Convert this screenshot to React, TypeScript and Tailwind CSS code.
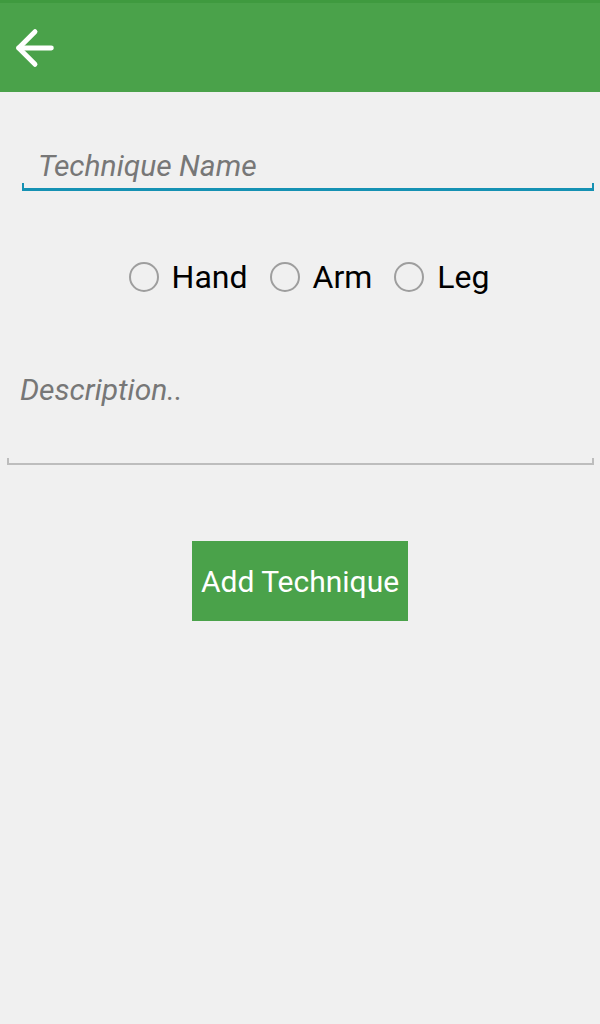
import { ArrowLeft } from "lucide-react";

const font = { fontFamily: "Roboto, 'Noto Sans', sans-serif" };

function Radio({ label }: { label: string }) {
  return (
    <label className="flex items-center gap-[13px]">
      <span className="block h-[30px] w-[30px] rounded-full border-2 border-[#9e9e9e]" />
      <span className="text-[32px] leading-none text-black">{label}</span>
    </label>
  );
}

export default function App() {
  return (
    <div className="flex min-h-[1024px] w-[600px] flex-col bg-[#f0f0f0]" style={font}>
      {/* Toolbar */}
      <header className="flex h-[92px] items-center border-t-[3px] border-[#3f9a3f] bg-[#4aa24a] pl-[7px]">
        <ArrowLeft size={56} strokeWidth={2.1} className="text-white" />
      </header>

      {/* Technique name */}
      <div className="px-[22px] pt-[59px] pr-[6px]">
        <div className="relative border-b-[3px] border-[#1591b3] pb-[5px] pl-[16px]">
          <span className="text-[30px] italic leading-none text-[#777]">Technique Name</span>
          <span className="absolute -bottom-[3px] left-0 h-[8px] w-[2px] bg-[#1591b3]" />
          <span className="absolute -bottom-[3px] right-0 h-[8px] w-[2px] bg-[#1591b3]" />
        </div>
      </div>

      {/* Body part */}
      <div className="mt-[70px] flex justify-center gap-[22px] pl-[18px]">
        <Radio label="Hand" />
        <Radio label="Arm" />
        <Radio label="Leg" />
      </div>

      {/* Description */}
      <div className="mt-[82px] px-[7px] pr-[6px]">
        <div className="relative h-[90px] border-b-2 border-[#bdbdbd] pl-[13px]">
          <span className="text-[30px] italic leading-none text-[#777]">Description..</span>
          <span className="absolute -bottom-[2px] left-0 h-[7px] w-[2px] bg-[#bdbdbd]" />
          <span className="absolute -bottom-[2px] right-0 h-[7px] w-[2px] bg-[#bdbdbd]" />
        </div>
      </div>

      <div className="mt-[76px] flex justify-center">
        <button className="h-[80px] w-[216px] bg-[#4aa24a] text-[30px] text-white">Add Technique</button>
      </div>
    </div>
  );
}
